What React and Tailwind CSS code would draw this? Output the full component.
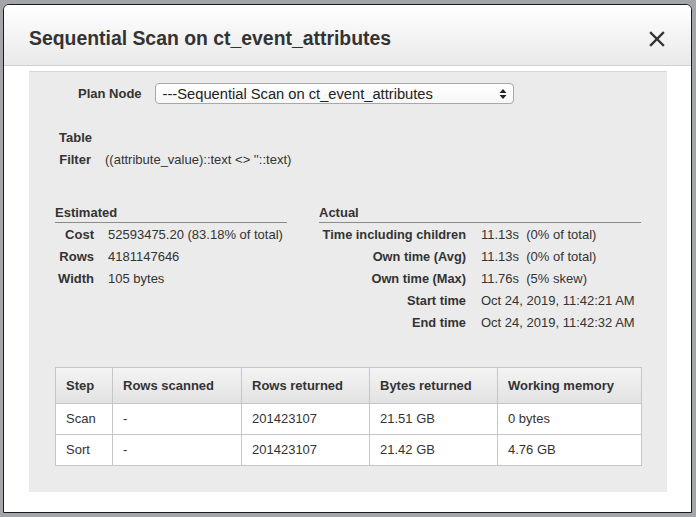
import React from 'react';

const estimated = [
  ['Cost', '52593475.20 (83.18% of total)'],
  ['Rows', '4181147646'],
  ['Width', '105 bytes'],
];

const actual = [
  ['Time including children', '11.13s  (0% of total)'],
  ['Own time (Avg)', '11.13s  (0% of total)'],
  ['Own time (Max)', '11.76s  (5% skew)'],
  ['Start time', 'Oct 24, 2019, 11:42:21 AM'],
  ['End time', 'Oct 24, 2019, 11:42:32 AM'],
];

const columns = [
  { title: 'Step', w: 'w-[57px]' },
  { title: 'Rows scanned', w: 'w-[129px]' },
  { title: 'Rows returned', w: 'w-[128px]' },
  { title: 'Bytes returned', w: 'w-[128px]' },
  { title: 'Working memory', w: 'w-[144px]' },
];

const steps = [
  ['Scan', '-', '201423107', '21.51 GB', '0 bytes'],
  ['Sort', '-', '201423107', '21.42 GB', '4.76 GB'],
];

export default function App() {
  return (
    <div className="w-[696px] h-[517px] overflow-hidden bg-[#a4a5a8] pt-[4px] pl-[3px] font-['Liberation_Sans',Arial,sans-serif] text-[#333]">
      <div className="w-[689px] h-[509px] bg-white border border-[#1c1c1c] rounded-t-[6px] flex flex-col overflow-hidden">
        {/* ── Header ── */}
        <div className="h-[61px] flex-shrink-0 flex items-start justify-between pl-[25px] pr-[26px] pt-[22px] border-b border-[#cfcfcf] bg-gradient-to-b from-white to-[#e9e9e9]">
          <h1 className="text-[19.4px] leading-[22px] font-bold text-[#333]">Sequential Scan on ct_event_attributes</h1>
          <svg width="16" height="16" viewBox="0 0 16 16" className="mt-[4px]">
            <path d="M2 2 L14 14 M14 2 L2 14" stroke="#333" strokeWidth="2.4" strokeLinecap="square" />
          </svg>
        </div>

        {/* ── Body ── */}
        <div className="px-[25px] pt-[5px]">
          <div className="w-[638px] h-[421px] bg-[#ebebeb] border-t border-[#d6d6d6] pt-[11px]">
            {/* plan node select */}
            <div className="flex items-center pl-[49px] gap-[13px]">
              <span className="text-[13px] font-bold text-[#333]">Plan Node</span>
              <div className="w-[359px] h-[21px] rounded-[4px] border border-[#a8a8a8] bg-gradient-to-b from-white to-[#f7f7f7] flex items-center justify-between pl-[7px] pr-[6px]">
                <span className="text-[14.7px] leading-[18px] text-[#222]">---Sequential Scan on ct_event_attributes</span>
                <svg width="8" height="12" viewBox="0 0 8 12">
                  <path d="M4 1 L7.5 5 L0.5 5 Z M4 11 L7.5 7 L0.5 7 Z" fill="#222" />
                </svg>
              </div>
            </div>

            {/* table / filter */}
            <div className="mt-[23px] pl-[30px] text-[13px] leading-[22px]">
              <div className="flex">
                <span className="w-[32px] text-right font-bold">Table</span>
              </div>
              <div className="flex">
                <span className="w-[32px] text-right font-bold">Filter</span>
                <span className="ml-[14px]">((attribute_value)::text &lt;&gt; ''::text)</span>
              </div>
            </div>

            {/* estimated / actual */}
            <div className="mt-[33px] pl-[26px] flex gap-[32px] text-[13px]">
              <div className="w-[232px]">
                <div className="font-bold leading-[18px] border-b border-[#8a8a8a]">Estimated</div>
                <div className="mt-[1px]">
                  {estimated.map(([k, v]) => (
                    <div key={k} className="flex leading-[22px]">
                      <span className="w-[39px] text-right font-bold">{k}</span>
                      <span className="ml-[14px] whitespace-pre">{v}</span>
                    </div>
                  ))}
                </div>
              </div>
              <div className="w-[322px]">
                <div className="font-bold leading-[18px] border-b border-[#8a8a8a]">Actual</div>
                <div className="mt-[1px]">
                  {actual.map(([k, v]) => (
                    <div key={k} className="flex leading-[22px]">
                      <span className="w-[147px] text-right font-bold whitespace-nowrap text-[12.8px]">{k}</span>
                      <span className="ml-[15px] whitespace-pre">{v}</span>
                    </div>
                  ))}
                </div>
              </div>
            </div>

            {/* steps table */}
            <div className="mt-[33px] ml-[26px]">
              <table className="border-collapse text-[13px]">
                <thead>
                  <tr className="bg-gradient-to-b from-[#f4f4f4] to-[#e2e2e2]">
                    {columns.map((c) => (
                      <th key={c.title} className={`${c.w} h-[36px] border border-[#c6c6c6] text-left font-bold pl-[10px] text-[#333]`}>
                        {c.title}
                      </th>
                    ))}
                  </tr>
                </thead>
                <tbody>
                  {steps.map((row) => (
                    <tr key={row[0]} className="bg-white">
                      {row.map((cell, i) => (
                        <td key={i} className="h-[31px] border border-[#c6c6c6] pl-[10px] text-[#333]">
                          {cell}
                        </td>
                      ))}
                    </tr>
                  ))}
                </tbody>
              </table>
            </div>
          </div>
        </div>
      </div>
    </div>
  );
}
